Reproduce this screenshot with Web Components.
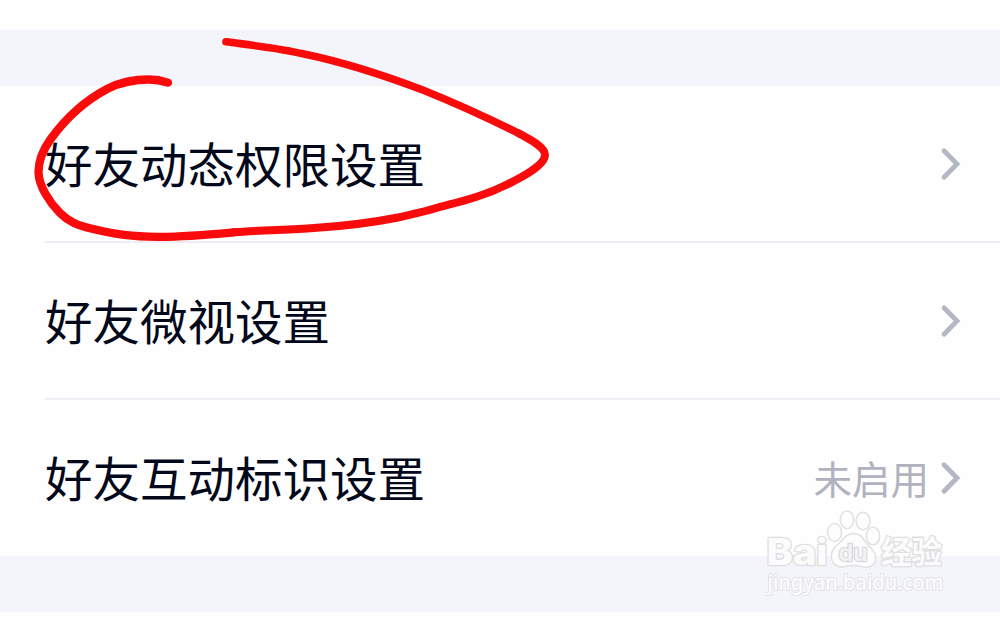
<!DOCTYPE html>
<html lang="zh-CN">
<head>
<meta charset="UTF-8">
<title>好友设置</title>
<style>
    body {
        margin: 0;
        background: #fefefe;
        font-family: "Noto Sans CJK SC", sans-serif;
    }
</style>
</head>
<body>
<settings-page>
    <settings-group>
        <settings-row>好友动态权限设置</settings-row>
        <settings-row>好友微视设置</settings-row>
        <settings-row>好友互动标识设置<span slot="value">未启用</span></settings-row>
    </settings-group>
    <pen-circle slot="overlay"></pen-circle>
    <baidu-watermark slot="overlay"></baidu-watermark>
</settings-page>

<script>
// Page with the grey bands above and below the group
class SettingsPage extends HTMLElement {
    constructor() {
        super();
        this.shadow = this.attachShadow({mode: 'open'})
    }

    connectedCallback() {
        this.shadow.innerHTML = `
            <style>
                :host {
                    display: flex;
                    flex-direction: column;
                    box-sizing: border-box;
                    position: relative;
                    width: 1000px;
                    height: 617px;
                    padding-top: 30px;
                    overflow: hidden;
                }
                .band {
                    height: 56px;
                    background: #f4f5fa;
                }
            </style>
            <div class="band"></div>
            <slot></slot>
            <div class="band"></div>
            <slot name="overlay"></slot>
        `
    }
}

class SettingsGroup extends HTMLElement {
    constructor() {
        super();
        this.shadow = this.attachShadow({mode: 'open'})
    }

    connectedCallback() {
        this.shadow.innerHTML = `
            <style>
                :host {
                    display: flex;
                    flex-direction: column;
                    height: 470px;
                    padding-left: 45px;
                    background: #fefefe;
                }
                /* No divider under the last row */
                ::slotted(settings-row:not(:last-child)) {
                    border-bottom: 2px solid #eeeff5;
                }
            </style>
            <slot></slot>
        `
    }
}

class SettingsRow extends HTMLElement {
    constructor() {
        super();
        this.shadow = this.attachShadow({mode: 'open'})
    }

    connectedCallback() {
        this.shadow.innerHTML = `
            <style>
                :host {
                    display: flex;
                    align-items: center;
                    height: 155px;
                    padding-right: 37px;
                    color: #03081a;
                    font-size: 47.5px;
                    line-height: 70px;
                }
                .label {
                    flex: 1;
                    padding-bottom: 1px;
                }
                .value {
                    margin-right: 8px;
                    padding-bottom: 1px;
                    color: #b0b3bf;
                    font-size: 38.5px;
                }
                svg {
                    display: block;
                    margin-top: 1px;
                }
            </style>
            <div class="label"><slot></slot></div>
            <div class="value"><slot name="value"></slot></div>
            <svg width="26" height="36" viewBox="0 0 26 36" fill="none" stroke="#b4b7c4" stroke-width="4.8" stroke-linecap="round">
                <path d="M7 4.7 L20 18 L7 31.3"/>
            </svg>
        `
    }
}

// Hand drawn red marker line
class PenCircle extends HTMLElement {
    constructor() {
        super();
        this.shadow = this.attachShadow({mode: 'open'})
    }

    connectedCallback() {
        this.shadow.innerHTML = `
            <style>
                :host {
                    display: block;
                    position: absolute;
                    top: 0;
                    left: 0;
                }
                svg { display: block; }
            </style>
            <svg width="600" height="260" viewBox="0 0 600 260" fill="none" stroke="#f90b0b" stroke-width="8" stroke-linecap="round" stroke-linejoin="round">
                <path stroke-width="7.6" d="M226 41.8 C258 46 281 48.5 304 54 C338 61 386 76 424 90.5 C455 103 490 119 519 133.5"/>
                <path d="M519 133.5 C530 139.5 545 147 545 155 C545 163 530 173 514 181 C503 187 489 193 476 197 C464 201 449 204.5 438 207.5 C424 212 408 215 398 217.5 C370 223 338 226.5 314 228 C288 229.7 258 230.5 234 232.3"/>
                <path stroke-width="8.3" d="M234 232.3 C210 234.5 188 236.6 160 236.8 C132 237 116 234.5 91 228.5 C78 225.5 69 222 60 213 C50 203 38.5 186 38.5 172 C38.5 160 43 150 50 140 C65 119 86 100 108 88.5 C124 80.5 137 79.5 149 79.5 C157 79.5 163 81 168 82.6"/>
            </svg>
        `
    }
}

class BaiduWatermark extends HTMLElement {
    constructor() {
        super();
        this.shadow = this.attachShadow({mode: 'open'})
    }

    connectedCallback() {
        this.shadow.innerHTML = `
            <style>
                :host {
                    display: block;
                    position: absolute;
                    left: 760px;
                    top: 505px;
                }
                svg {
                    display: block;
                    overflow: visible;
                }
                text {
                    paint-order: stroke;
                    stroke-linejoin: round;
                }
                .big {
                    fill: #fcfcfd;
                    stroke: #dfdfe1;
                    stroke-width: 2.6;
                    font-weight: 800;
                }
                .latin { font-family: Inter, "Liberation Sans", sans-serif; }
                .cjk {
                    font-family: "Noto Sans CJK SC", sans-serif;
                    font-weight: 700;
                }
                .du {
                    font-weight: 600;
                    fill: #f3f3f4;
                    stroke: #d8d8da;
                    stroke-width: 2.4;
                }
                .url {
                    font-family: "Noto Sans", sans-serif;
                    font-weight: 500;
                    fill: #fcfcfd;
                    stroke: #e3e3e8;
                    stroke-width: 2;
                }
            </style>
            <svg width="200" height="110" viewBox="0 0 200 110">
                <g fill="#fdfdfd" stroke="#e0e0e2" stroke-width="1.5">
                    <ellipse cx="74.5" cy="27.5" rx="7" ry="9"/>
                    <ellipse cx="87" cy="14.8" rx="6.7" ry="8.8"/>
                    <ellipse cx="103" cy="16" rx="7" ry="8.8"/>
                    <ellipse cx="113" cy="31" rx="6.7" ry="8.8"/>
                    <path d="M93.5 28.5 C86 28.5 83 35 77 40 C72 44.5 70.5 49 71.8 54.5 C73.5 61.5 80 62.8 87 61.2 C92 60 96 60 101 61.4 C109 63.5 115.5 61 115.8 53 C116 46 110 43 105.5 37 C102 32 100 28.5 93.5 28.5Z"/>
                </g>
                <text class="big latin" x="6.5" y="59.5" font-size="36.5" textLength="61" lengthAdjust="spacingAndGlyphs">Bai</text>
                <text class="big latin du" x="78.5" y="56.3" font-size="23" textLength="29" lengthAdjust="spacingAndGlyphs">du</text>
                <text class="big cjk" x="121" y="58" font-size="30.5" textLength="61" lengthAdjust="spacingAndGlyphs">经验</text>
                <text class="url" x="7.5" y="84.5" font-size="21" textLength="176" lengthAdjust="spacingAndGlyphs">jingyan.baidu.com</text>
            </svg>
        `
    }
}

customElements.define('settings-page', SettingsPage);
customElements.define('settings-group', SettingsGroup);
customElements.define('settings-row', SettingsRow);
customElements.define('pen-circle', PenCircle);
customElements.define('baidu-watermark', BaiduWatermark);
</script>
</body>
</html>
